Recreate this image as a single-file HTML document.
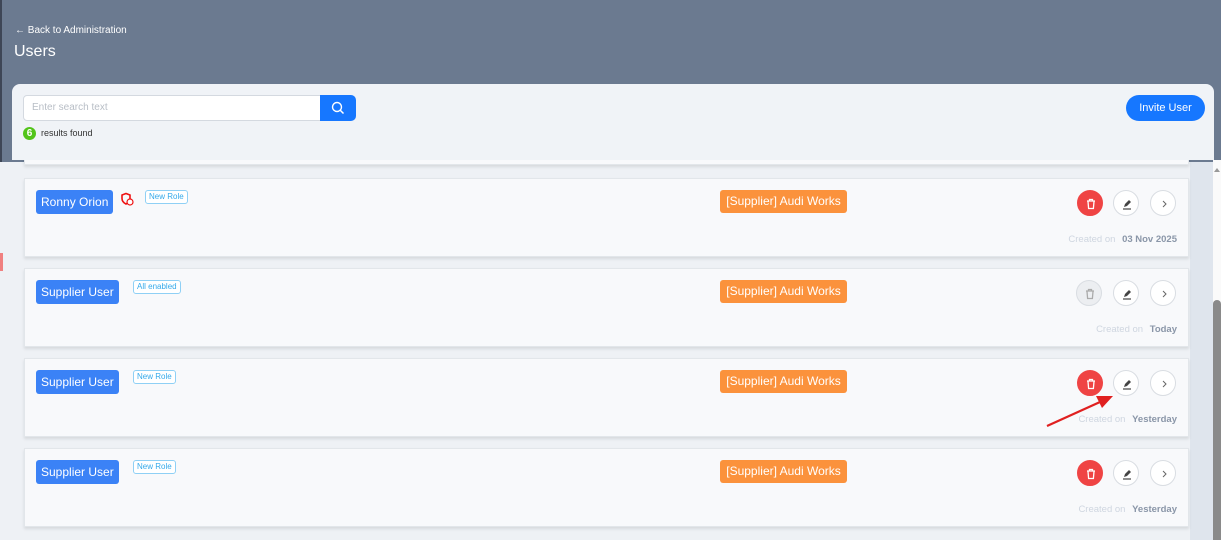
<!DOCTYPE html>
<html><head><style>
*{box-sizing:border-box;margin:0;padding:0}
body{width:1221px;height:540px;overflow:hidden;background:#eef1f5;font-family:"Liberation Sans",sans-serif;position:relative}
.hdr{position:absolute;left:0;top:0;width:1221px;height:162px;background:#6b7a90;border-left:2px solid #3e4656}
.back{position:absolute;left:13px;top:25px;color:#fff;font-size:10px}
.title{position:absolute;left:12px;top:43px;color:#fff;font-size:16px}
.col{position:absolute;left:1190px;top:162px;width:23px;height:378px;background:#dfe5ed}
.sb{position:absolute;left:1213px;top:160px;width:8px;height:380px;background:#fafafa}
.thumb{position:absolute;left:1213px;top:300px;width:8px;height:240px;background:#8a8a8a;border-radius:4px 4px 0 0}
.panel{position:absolute;left:12px;top:84px;width:1202px;height:76px;background:#f0f3f7;border-radius:8px 8px 0 0}
.search{position:absolute;left:23px;top:95px;width:298px;height:26px;background:#fff;border:1px solid #d4d9e0;border-radius:4px 0 0 4px;font-size:10px;color:#b8bec6;padding:6px 8px}
.sbtn{position:absolute;left:320px;top:95px;width:36px;height:26px;background:#1677ff;border-radius:0 5px 5px 0}
.cnt{position:absolute;left:23px;top:127px;width:13px;height:13px;border-radius:50%;background:#52c41a;color:#fff;font-size:10px;font-weight:bold;text-align:center;line-height:13px}
.rf{position:absolute;left:41px;top:128px;font-size:9px;color:#333}
.inv{position:absolute;left:1126px;top:95px;width:79px;height:26px;background:#1677ff;color:#fff;border-radius:13px;font-size:11px;text-align:center;line-height:26px}
.card{position:absolute;left:24px;width:1165px;height:79px;background:#f8f9fb;border:1px solid #e2e6ea;box-shadow:0 2px 3px rgba(0,0,0,.1)}
.nm{position:absolute;left:11px;top:11px;height:24px;background:#3b82f6;color:#fff;border-radius:3px;font-size:12px;line-height:24px;padding:0 5px}
.tag{position:absolute;top:11px;height:14px;border:1px solid #8fd0f5;color:#35a9ea;border-radius:3px;font-size:8px;line-height:12px;padding:0 3px;background:#fff}
.org{position:absolute;left:695px;top:11px;width:127px;height:23px;background:#fb923c;color:#fff;border-radius:3px;font-size:12px;line-height:23px;text-align:center}
.b{position:absolute;top:11px;width:26px;height:26px;border-radius:50%;border:1px solid #d9dde2;background:#fff}
.b svg{position:absolute;left:6px;top:6px}
.del{left:1052px;background:#ef4444;border-color:#ef4444}
.dis{left:1051px;background:#eceef1}
.ed{left:1088px}.go{left:1125px}
.cr{position:absolute;right:11px;top:55px;font-size:9.5px;color:#cfd6e0}
.cr b{color:#8a96a8;margin-left:4px}
</style></head><body>
<div class="hdr"><div class="back">← Back to Administration</div><div class="title">Users</div></div>
<div style="position:absolute;left:0;top:253px;width:3px;height:18px;background:#f08080"></div>
<div class="col"></div><div class="sb"></div><div class="thumb"></div>
<svg style="position:absolute;left:1213px;top:166px" width="8" height="8"><path d="M1 6L4 2L7 6z" fill="#999"/></svg>
<div class="card" style="top:86px;left:24px"></div>
<div class="panel"></div>
<div class="search">Enter search text</div>
<div class="sbtn"><svg width="36" height="26"><circle cx="17" cy="12" r="4.5" fill="none" stroke="#fff" stroke-width="1.4"/><path d="M20 15l3.5 3.5" stroke="#fff" stroke-width="1.5"/></svg></div>
<div class="cnt">6</div><div class="rf">results found</div>
<div class="inv">Invite User</div>

<div class="card" style="top:178px"><div class="nm">Ronny Orion</div>
<svg style="position:absolute;left:95px;top:13px" width="14" height="14"><path d="M6 1.5l4 1.5v3.5c0 3-2 4.5-4 5.5C4 11 2 9.5 2 6.5V3z" fill="none" stroke="#e11" stroke-width="1.6"/><circle cx="10" cy="10" r="3" fill="#fff" stroke="#e11" stroke-width="1.2"/></svg>
<div class="tag" style="left:120px">New Role</div>
<div class="org">[Supplier] Audi Works</div>
<div class="b del"><svg width="14" height="14"><path d="M3 4h8M5.5 4V2.5h3V4M4 4.5l.6 7h4.8l.6-7" fill="none" stroke="#fff" stroke-width="1.3"/></svg></div>
<div class="b ed"><svg width="14" height="14"><path d="M4 10l1-3 4-4 2 2-4 4z" fill="#444"/><path d="M3 12h8" stroke="#444" stroke-width="1.2"/></svg></div>
<div class="b go"><svg width="14" height="14"><path d="M6 4l3 3-3 3" fill="none" stroke="#666" stroke-width="1"/></svg></div>
<div class="cr">Created on <b>03 Nov 2025</b></div></div>

<div class="card" style="top:268px"><div class="nm">Supplier User</div>
<div class="tag" style="left:108px">All enabled</div>
<div class="org">[Supplier] Audi Works</div>
<div class="b dis"><svg width="14" height="14"><path d="M3 4h8M5.5 4V2.5h3V4M4 4.5l.6 7h4.8l.6-7" fill="none" stroke="#aaa" stroke-width="1.3"/></svg></div>
<div class="b ed"><svg width="14" height="14"><path d="M4 10l1-3 4-4 2 2-4 4z" fill="#444"/><path d="M3 12h8" stroke="#444" stroke-width="1.2"/></svg></div>
<div class="b go"><svg width="14" height="14"><path d="M6 4l3 3-3 3" fill="none" stroke="#666" stroke-width="1"/></svg></div>
<div class="cr">Created on <b>Today</b></div></div>

<div class="card" style="top:358px"><div class="nm">Supplier User</div>
<div class="tag" style="left:108px">New Role</div>
<div class="org">[Supplier] Audi Works</div>
<div class="b del"><svg width="14" height="14"><path d="M3 4h8M5.5 4V2.5h3V4M4 4.5l.6 7h4.8l.6-7" fill="none" stroke="#fff" stroke-width="1.3"/></svg></div>
<div class="b ed"><svg width="14" height="14"><path d="M4 10l1-3 4-4 2 2-4 4z" fill="#444"/><path d="M3 12h8" stroke="#444" stroke-width="1.2"/></svg></div>
<div class="b go"><svg width="14" height="14"><path d="M6 4l3 3-3 3" fill="none" stroke="#666" stroke-width="1"/></svg></div>
<div class="cr">Created on <b>Yesterday</b></div></div>

<div class="card" style="top:448px"><div class="nm">Supplier User</div>
<div class="tag" style="left:108px">New Role</div>
<div class="org">[Supplier] Audi Works</div>
<div class="b del"><svg width="14" height="14"><path d="M3 4h8M5.5 4V2.5h3V4M4 4.5l.6 7h4.8l.6-7" fill="none" stroke="#fff" stroke-width="1.3"/></svg></div>
<div class="b ed"><svg width="14" height="14"><path d="M4 10l1-3 4-4 2 2-4 4z" fill="#444"/><path d="M3 12h8" stroke="#444" stroke-width="1.2"/></svg></div>
<div class="b go"><svg width="14" height="14"><path d="M6 4l3 3-3 3" fill="none" stroke="#666" stroke-width="1"/></svg></div>
<div class="cr">Created on <b>Yesterday</b></div></div>

<svg style="position:absolute;left:1040px;top:390px" width="80" height="40"><path d="M7 36L60 12" stroke="#e02020" stroke-width="2.2"/><path d="M73 6L56 6L62 18z" fill="#e02020"/></svg>
</body></html>
